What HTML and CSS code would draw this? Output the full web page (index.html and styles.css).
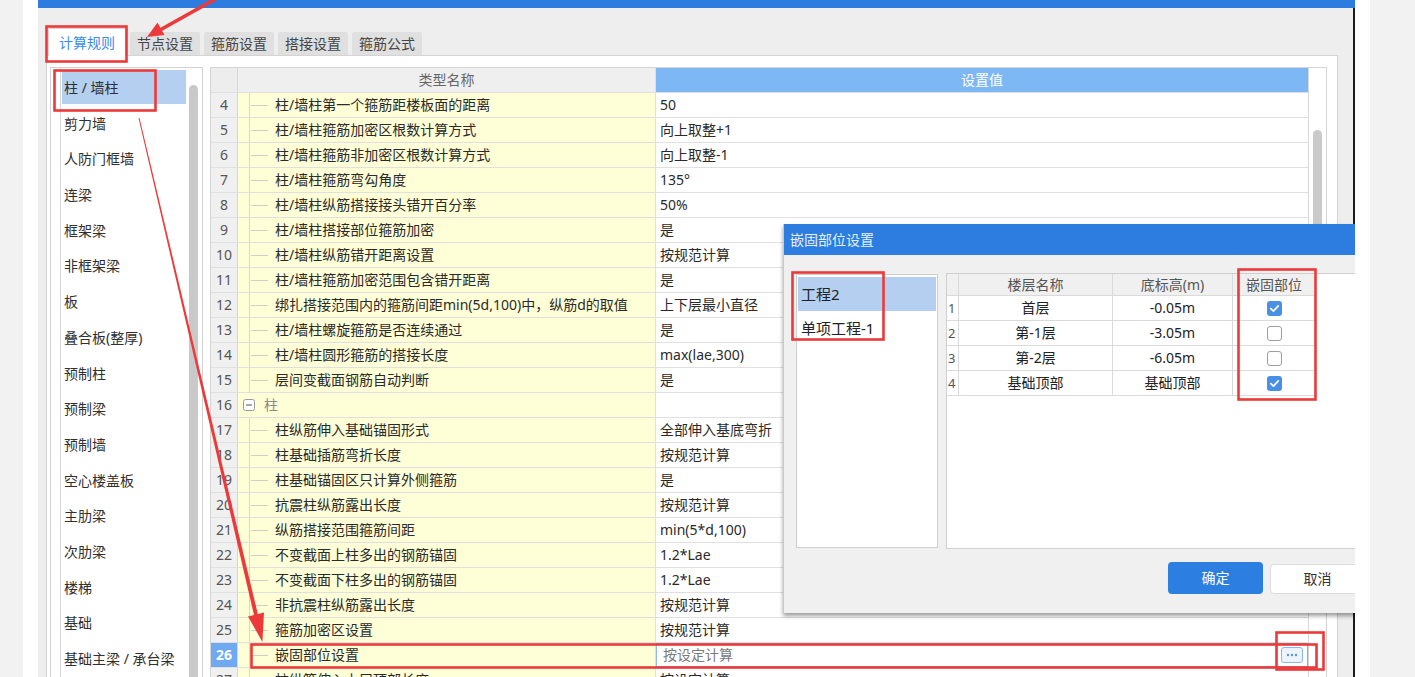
FILE: index.html
```html
<!DOCTYPE html>
<html lang="zh">
<head>
<meta charset="utf-8">
<title>计算规则</title>
<link rel="stylesheet" href="styles.css">
</head>
<body>
<div class="sheet">
  <div class="window">
    <div class="titlebar"></div>
    <div class="wbody">
      <div class="tabs">
        <div class="tab active">计算规则</div>
        <div class="tab">节点设置</div>
        <div class="tab">箍筋设置</div>
        <div class="tab">搭接设置</div>
        <div class="tab">箍筋公式</div>
      </div>
      <div class="panel">
        <div class="catlist">
          <div class="cat-inner">
            <div class="items">
              <div class="item sel">柱 / 墙柱</div>
              <div class="item">剪力墙</div>
              <div class="item">人防门框墙</div>
              <div class="item">连梁</div>
              <div class="item">框架梁</div>
              <div class="item">非框架梁</div>
              <div class="item">板</div>
              <div class="item">叠合板(整厚)</div>
              <div class="item">预制柱</div>
              <div class="item">预制梁</div>
              <div class="item">预制墙</div>
              <div class="item">空心楼盖板</div>
              <div class="item">主肋梁</div>
              <div class="item">次肋梁</div>
              <div class="item">楼梯</div>
              <div class="item">基础</div>
              <div class="item">基础主梁 / 承台梁</div>
            </div>
          </div>
          <div class="lscroll"><div class="lthumb"></div></div>
        </div>
        <div class="grid">
          <div class="table">
            <div class="row head"><div class="c num"></div><div class="c name">类型名称</div><div class="c val">设置值</div></div>
            <div class="row"><div class="c num">4</div><div class="c name"><span class="tree"></span>柱/墙柱第一个箍筋距楼板面的距离</div><div class="c val">50</div></div>
            <div class="row"><div class="c num">5</div><div class="c name"><span class="tree"></span>柱/墙柱箍筋加密区根数计算方式</div><div class="c val">向上取整+1</div></div>
            <div class="row"><div class="c num">6</div><div class="c name"><span class="tree"></span>柱/墙柱箍筋非加密区根数计算方式</div><div class="c val">向上取整-1</div></div>
            <div class="row"><div class="c num">7</div><div class="c name"><span class="tree"></span>柱/墙柱箍筋弯勾角度</div><div class="c val">135°</div></div>
            <div class="row"><div class="c num">8</div><div class="c name"><span class="tree"></span>柱/墙柱纵筋搭接接头错开百分率</div><div class="c val">50%</div></div>
            <div class="row"><div class="c num">9</div><div class="c name"><span class="tree"></span>柱/墙柱搭接部位箍筋加密</div><div class="c val">是</div></div>
            <div class="row"><div class="c num">10</div><div class="c name"><span class="tree"></span>柱/墙柱纵筋错开距离设置</div><div class="c val">按规范计算</div></div>
            <div class="row"><div class="c num">11</div><div class="c name"><span class="tree"></span>柱/墙柱箍筋加密范围包含错开距离</div><div class="c val">是</div></div>
            <div class="row"><div class="c num">12</div><div class="c name"><span class="tree"></span>绑扎搭接范围内的箍筋间距min(5d,100)中，纵筋d的取值</div><div class="c val">上下层最小直径</div></div>
            <div class="row"><div class="c num">13</div><div class="c name"><span class="tree"></span>柱/墙柱螺旋箍筋是否连续通过</div><div class="c val">是</div></div>
            <div class="row"><div class="c num">14</div><div class="c name"><span class="tree"></span>柱/墙柱圆形箍筋的搭接长度</div><div class="c val">max(lae,300)</div></div>
            <div class="row"><div class="c num">15</div><div class="c name"><span class="tree"></span>层间变截面钢筋自动判断</div><div class="c val">是</div></div>
            <div class="row"><div class="c num">16</div><div class="c name group"><svg class="toggle" width="12" height="12" viewBox="0 0 12 12"><rect x="0.5" y="0.5" width="11" height="11" rx="2" fill="#fff" stroke="#9a9a9a"/><line x1="3" y1="6" x2="9" y2="6" stroke="#555" stroke-width="1"/></svg><span class="gname">柱</span></div><div class="c val"></div></div>
            <div class="row"><div class="c num">17</div><div class="c name"><span class="tree"></span>柱纵筋伸入基础锚固形式</div><div class="c val">全部伸入基底弯折</div></div>
            <div class="row"><div class="c num">18</div><div class="c name"><span class="tree"></span>柱基础插筋弯折长度</div><div class="c val">按规范计算</div></div>
            <div class="row"><div class="c num">19</div><div class="c name"><span class="tree"></span>柱基础锚固区只计算外侧箍筋</div><div class="c val">是</div></div>
            <div class="row"><div class="c num">20</div><div class="c name"><span class="tree"></span>抗震柱纵筋露出长度</div><div class="c val">按规范计算</div></div>
            <div class="row"><div class="c num">21</div><div class="c name"><span class="tree"></span>纵筋搭接范围箍筋间距</div><div class="c val">min(5*d,100)</div></div>
            <div class="row"><div class="c num">22</div><div class="c name"><span class="tree"></span>不变截面上柱多出的钢筋锚固</div><div class="c val">1.2*Lae</div></div>
            <div class="row"><div class="c num">23</div><div class="c name"><span class="tree"></span>不变截面下柱多出的钢筋锚固</div><div class="c val">1.2*Lae</div></div>
            <div class="row"><div class="c num">24</div><div class="c name"><span class="tree"></span>非抗震柱纵筋露出长度</div><div class="c val">按规范计算</div></div>
            <div class="row"><div class="c num">25</div><div class="c name"><span class="tree"></span>箍筋加密区设置</div><div class="c val">按规范计算</div></div>
            <div class="row"><div class="c num cur">26</div><div class="c name"><span class="tree"></span>嵌固部位设置</div><div class="c val edit"><div class="editor"><span class="etext">按设定计算</span><span class="dots"><svg width="20" height="14" viewBox="0 0 20 14"><circle cx="6" cy="7" r="1.2" fill="#5b95d6"/><circle cx="10" cy="7" r="1.2" fill="#5b95d6"/><circle cx="14" cy="7" r="1.2" fill="#5b95d6"/></svg></span></div></div></div>
            <div class="row"><div class="c num">27</div><div class="c name"><span class="tree"></span>柱纵筋伸入上层顶部长度</div><div class="c val">按设定计算</div></div>
          </div>
          <div class="vscroll"><div class="vthumb"></div></div>
        </div>
      </div>
    </div>

    <div class="dialog">
      <div class="dtitle">嵌固部位设置</div>
      <div class="dbody">
        <div class="dleft">
          <div class="ditem sel">工程2</div>
          <div class="ditem">单项工程-1</div>
        </div>
        <div class="dright">
          <div class="drow dhead"><div class="dc dn"></div><div class="dc">楼层名称</div><div class="dc">底标高(m)</div><div class="dc">嵌固部位</div></div>
          <div class="drow"><div class="dc dn">1</div><div class="dc">首层</div><div class="dc">-0.05m</div><div class="dc"><span class="cb on"><svg width="15" height="15" viewBox="0 0 15 15"><path d="M3.8 7.6 L6.4 10.1 L11.3 4.8" fill="none" stroke="#fff" stroke-width="1.7" stroke-linecap="round" stroke-linejoin="round"/></svg></span></div></div>
          <div class="drow"><div class="dc dn">2</div><div class="dc">第-1层</div><div class="dc">-3.05m</div><div class="dc"><span class="cb"></span></div></div>
          <div class="drow"><div class="dc dn">3</div><div class="dc">第-2层</div><div class="dc">-6.05m</div><div class="dc"><span class="cb"></span></div></div>
          <div class="drow"><div class="dc dn">4</div><div class="dc">基础顶部</div><div class="dc">基础顶部</div><div class="dc"><span class="cb on"><svg width="15" height="15" viewBox="0 0 15 15"><path d="M3.8 7.6 L6.4 10.1 L11.3 4.8" fill="none" stroke="#fff" stroke-width="1.7" stroke-linecap="round" stroke-linejoin="round"/></svg></span></div></div>
        </div>
      </div>
      <div class="dbtns">
        <div class="btn ok">确定</div>
        <div class="btn cancel">取消</div>
      </div>
    </div>
  </div>
</div>

<svg class="annot" width="1415" height="677" viewBox="0 0 1415 677">
  <g fill="none" stroke="#ec3a3a" stroke-width="2.6">
    <rect x="46.5" y="26.5" width="80" height="35"/>
    <rect x="54.5" y="70.5" width="101" height="40"/>
    <rect x="792.5" y="272.5" width="91" height="67"/>
    <rect x="1238.5" y="269.5" width="77" height="130"/>
    <rect x="251.5" y="644.5" width="1065" height="23"/>
    <rect x="1276.5" y="632.5" width="47" height="37"/>
    <line x1="219" y1="-3" x2="160" y2="30" stroke-width="3.6"/>
  </g>
  <g fill="#ec3a3a">
    <polygon points="147,37 164.5,35 157.5,22.5"/>
    <polygon points="139.5,117.9 138.5,118.1 254.2,616 258,614.8"/>
    <polygon points="262.4,642 264,612.6 248,616.4"/>
  </g>
</svg>
</body>
</html>
```

FILE: styles.css
```css
* { box-sizing: border-box; }

html, body {
  margin: 0;
  padding: 0;
}

body {
  position: relative;
  width: 1415px;
  height: 677px;
  overflow: hidden;
  background: #f2f2f2;
  font-family: "Noto Sans", "Noto Sans CJK SC", sans-serif;
  font-size: 14px;
  color: #2a2a2a;
}

.sheet {
  margin-left: 23px;
  width: 1347px;
  height: 677px;
  padding-left: 15px;
  background: #ffffff;
}

.window {
  position: relative;
  width: 1317px;
  height: 677px;
  overflow: hidden;
  display: flex;
  flex-direction: column;
}

.titlebar {
  height: 8px;
  flex: none;
  background: #2c7ddf;
}

.wbody {
  flex: 1;
  min-height: 0;
  background: #eeeeee;
  border-right: 2px solid #1c1c1c;
  padding: 20px 0 0 8px;
  display: flex;
  flex-direction: column;
}

/* tabs */
.tabs {
  height: 27px;
  flex: none;
  display: flex;
  align-items: flex-end;
  margin-left: 2px;
  position: relative;
  z-index: 1;
}

.tab {
  height: 23px;
  line-height: 23px;
  padding: 0 7px;
  margin-right: 4px;
  background: #e0e0e0;
  color: #454545;
  border-radius: 2px 2px 0 0;
  white-space: nowrap;
}

.tab.active {
  height: 28px;
  line-height: 27px;
  margin-bottom: -1px;
  margin-right: 4px;
  padding: 0 10px;
  background: #ffffff;
  border: 1px solid #d4d4d4;
  border-bottom: none;
  color: #3b8de6;
}

/* panel */
.panel {
  width: 1292px;
  flex: 1;
  min-height: 0;
  display: flex;
  align-items: flex-start;
  background: #ffffff;
  border: 1px solid #d4d4d4;
  border-bottom: none;
  padding: 11px 10px 0 3px;
}

.catlist {
  width: 153px;
  height: 640px;
  flex: none;
  display: flex;
  border: 1px solid #d2d2d2;
}

.cat-inner {
  width: 127px;
  margin-left: 9px;
  border-left: 1px solid #d6d6d6;
}

.items {
  padding: 2px 1px 0;
}

.item {
  height: 35.7px;
  line-height: 35.7px;
  padding-left: 2px;
  color: #303030;
  white-space: nowrap;
}

.item.sel {
  background: linear-gradient(#b5cff0, #b5cff0) no-repeat 0 0 / 100% 34px;
}

.lscroll {
  width: 14px;
  padding-top: 17px;
}

.lthumb {
  width: 9px;
  height: 600px;
  margin-left: 2px;
  background: #c9c9c9;
  border-radius: 5px;
}

/* main grid */
.grid {
  width: 1117px;
  height: 640px;
  flex: none;
  margin-left: 7px;
  display: flex;
  border: 1px solid #d4d4d4;
}

.table {
  width: 1098px;
  flex: none;
}

.row {
  display: grid;
  grid-template-columns: 27px 418px 653px;
  height: 25px;
}

.c {
  border-right: 1px solid #e0e0e0;
  border-bottom: 1px solid #e0e0e0;
  line-height: 24px;
  white-space: nowrap;
  overflow: hidden;
}

.c.num {
  background: #f0f0f0;
  border-right-color: #d6d6d6;
  text-align: center;
  color: #555555;
  font-size: 14px;
}

.c.num.cur {
  background: #6ea9f1;
  color: #ffffff;
  font-weight: bold;
}

.c.name {
  background: #fefed7;
  padding-left: 11px;
  display: flex;
  color: #2a2a2a;
}

.tree {
  width: 26px;
  flex: none;
  border-left: 1px solid #d8d8d0;
  background: linear-gradient(#cfcfc8, #cfcfc8) no-repeat 1px 12px / 17px 1px;
}

.c.name.group {
  align-items: center;
}

.toggle {
  margin-left: -6px;
  flex: none;
}

.gname {
  margin-left: 9px;
  color: #8a8a8a;
}

.c.val {
  background: #ffffff;
  padding-left: 4px;
  border-right-color: #d8d8d8;
  color: #2a2a2a;
}

.row.head .c {
  line-height: 24px;
  text-align: center;
}

.row.head .c.num {
  background: #ededed;
}

.row.head .c.name {
  display: block;
  padding-left: 0;
  background: #efefef;
  color: #666666;
}

.row.head .c.val {
  padding-left: 0;
  background: #7db8f5;
  color: #ffffff;
}

.c.val.edit {
  padding-left: 0;
}

.editor {
  height: 24px;
  border: 1px solid #8fbbee;
  border-right-color: #7aaeea;
  display: flex;
  align-items: center;
  justify-content: space-between;
  padding: 0 4px 0 6px;
}

.etext {
  color: #7a7a7a;
}

.dots {
  width: 22px;
  height: 16px;
  border: 1px solid #8db7e8;
  border-radius: 3px;
  background: #edf4fd;
  display: flex;
}

.vscroll {
  width: 17px;
  flex: none;
  padding-top: 62px;
}

.vthumb {
  width: 9px;
  height: 420px;
  margin-left: 4px;
  background: #cacaca;
  border-radius: 5px;
}

/* dialog */
.dialog {
  position: absolute;
  left: 745px;
  top: 224px;
  width: 640px;
  height: 389px;
  background: #f0f0f0;
  border-left: 1px solid #c9c9c9;
  box-shadow: 0 3px 4px rgba(0, 0, 0, 0.38);
  z-index: 2;
}

.dtitle {
  height: 31px;
  line-height: 31px;
  padding-left: 6px;
  background: #2c7ddf;
  color: #e6f0fd;
  font-size: 14px;
}

.dbody {
  display: flex;
  align-items: flex-start;
  gap: 8px;
  padding: 19px 0 0 12px;
}

.dleft {
  width: 142px;
  height: 274px;
  flex: none;
  background: #ffffff;
  border: 1px solid #cfcfcf;
  padding: 2px 1px 0;
}

.ditem {
  height: 34px;
  line-height: 34px;
  padding-left: 3px;
  font-size: 15px;
  color: #222222;
}

.ditem.sel {
  background: #b5cff0;
}

.dright {
  width: 450px;
  height: 276px;
  flex: none;
  margin-top: -1px;
  background: #ffffff;
  border: 1px solid #cfcfcf;
}

.drow {
  display: grid;
  grid-template-columns: 12px 154px 120px 83px;
  height: 25px;
}

.drow.dhead {
  height: 22px;
}

.dc {
  border-right: 1px solid #dadada;
  border-bottom: 1px solid #dadada;
  text-align: center;
  line-height: 24px;
  color: #222222;
  display: flex;
  align-items: center;
  justify-content: center;
}

.dhead .dc {
  background: #f0f0f0;
  color: #555555;
  line-height: 21px;
}

.dc.dn {
  justify-content: flex-start;
  padding-left: 1px;
  color: #555555;
  font-size: 13px;
}

.cb {
  width: 15px;
  height: 15px;
  border: 1px solid #9d9d9d;
  border-radius: 3px;
  background: #ffffff;
  display: block;
}

.cb.on {
  border: none;
  background: #4a8fe6;
}

.cb svg {
  display: block;
}

.dbtns {
  display: flex;
  align-items: flex-start;
  gap: 7px;
  margin-top: 13px;
  padding-left: 384px;
}

.btn {
  width: 95px;
  height: 32px;
  line-height: 32px;
  text-align: center;
  border-radius: 4px;
  font-size: 14px;
  flex: none;
}

.btn.ok {
  background: #2c7fe0;
  color: #ffffff;
}

.btn.cancel {
  height: 30px;
  line-height: 28px;
  margin-top: 2px;
  background: #ffffff;
  border: 1px solid #dcdcdc;
  color: #333333;
}

/* annotations */
.annot {
  position: absolute;
  left: 0;
  top: 0;
  pointer-events: none;
  z-index: 5;
}
```
